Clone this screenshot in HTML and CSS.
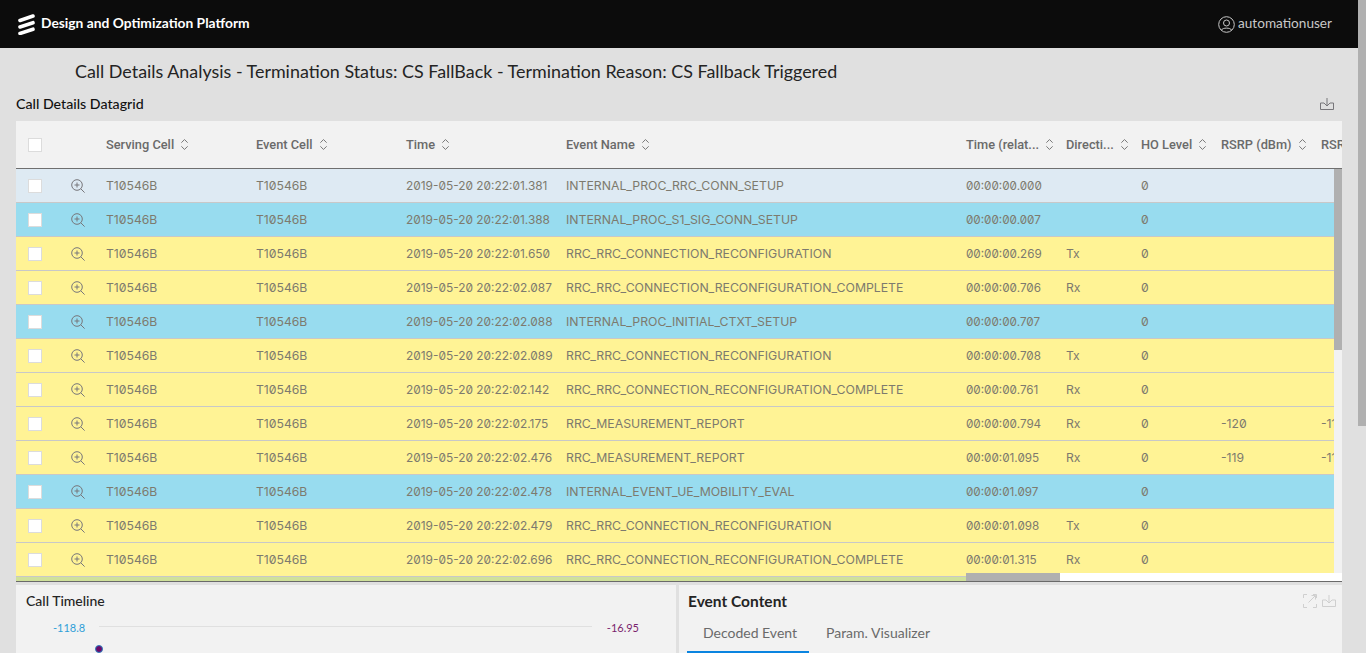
FILE: index.html
```html
<!DOCTYPE html>
<html lang="en">
  <head>
    <meta charset="UTF-8" />
    <title>Design and Optimization Platform</title>
    <link rel="stylesheet" href="styles.css">
  </head>

  <body>
    <svg class="defs" width="0" height="0">
      <symbol id="sort" viewBox="0 0 10 14">
        <path d="M1.5 5 L5 1.5 L8.5 5 M1.5 9 L5 12.5 L8.5 9" fill="none" stroke="currentColor" stroke-width="1" />
      </symbol>
      <symbol id="zoom" viewBox="0 0 14 14">
        <circle cx="6" cy="6" r="5.3" fill="none" stroke="currentColor" />
        <path d="M3.5 6 H8.5 M6 3.5 V8.5 M9.8 9.8 L13.6 13.6" fill="none" stroke="currentColor" />
      </symbol>
      <symbol id="download" viewBox="0 0 14 12">
        <path d="M4 5 H0.5 V11.5 H13.5 V5 H10 M7 0 V8 M4 5 L7 8 L10 5" fill="none" stroke="currentColor" />
      </symbol>
    </svg>

    <div class="page">
      <header class="topbar">
        <div class="brand">
          <svg class="logo" width="17" height="22" viewBox="0 0 17 22">
            <path d="M2 7.5 L15 3 M2 14 L15 9.7 M2 20.5 L15 16.2" fill="none" stroke="#fff" stroke-width="3.6" stroke-linecap="round" />
          </svg>
          <span>Design and Optimization Platform</span>
        </div>
        <div class="user">
          <svg width="17" height="17" viewBox="0 0 17 17">
            <circle cx="8.5" cy="8.5" r="7.8" fill="none" stroke="currentColor" />
            <circle cx="8.5" cy="7" r="3" fill="none" stroke="currentColor" />
            <path d="M3.5 14 C4.5 11.5 12.5 11.5 13.5 14" fill="none" stroke="currentColor" />
          </svg>
          <span>automationuser</span>
        </div>
      </header>

      <main class="content">
        <h1 class="pageTitle">Call Details Analysis - Termination Status: CS FallBack - Termination Reason: CS Fallback Triggered</h1>

        <div class="gridTitle">
          <h2>Call Details Datagrid</h2>
          <svg class="dlIcon" width="14" height="12"><use href="#download" /></svg>
        </div>

        <section class="grid">
          <div class="row head">
            <div><span class="check"></span></div>
            <div></div>
            <div>Serving Cell <svg class="sortIcon"><use href="#sort" /></svg></div>
            <div>Event Cell <svg class="sortIcon"><use href="#sort" /></svg></div>
            <div>Time <svg class="sortIcon"><use href="#sort" /></svg></div>
            <div>Event Name <svg class="sortIcon"><use href="#sort" /></svg></div>
            <div>Time (relat... <svg class="sortIcon"><use href="#sort" /></svg></div>
            <div>Directi... <svg class="sortIcon"><use href="#sort" /></svg></div>
            <div>HO Level <svg class="sortIcon"><use href="#sort" /></svg></div>
            <div>RSRP (dBm) <svg class="sortIcon"><use href="#sort" /></svg></div>
            <div>RSRQ (dB)</div>
          </div>

          <div class="bodyWrap">
            <div class="rows">
              <div class="row light"><div><span class="check"></span></div><div><svg class="zoomIcon"><use href="#zoom" /></svg></div><div>T10546B</div><div>T10546B</div><div class="date">2019-05-20 20:22:01.381</div><div class="name">INTERNAL_PROC_RRC_CONN_SETUP</div><div class="rel">00:00:00.000</div><div></div><div>0</div><div></div><div></div></div>
              <div class="row blue"><div><span class="check"></span></div><div><svg class="zoomIcon"><use href="#zoom" /></svg></div><div>T10546B</div><div>T10546B</div><div class="date">2019-05-20 20:22:01.388</div><div class="name">INTERNAL_PROC_S1_SIG_CONN_SETUP</div><div class="rel">00:00:00.007</div><div></div><div>0</div><div></div><div></div></div>
              <div class="row yellow"><div><span class="check"></span></div><div><svg class="zoomIcon"><use href="#zoom" /></svg></div><div>T10546B</div><div>T10546B</div><div class="date">2019-05-20 20:22:01.650</div><div class="name">RRC_RRC_CONNECTION_RECONFIGURATION</div><div class="rel">00:00:00.269</div><div>Tx</div><div>0</div><div></div><div></div></div>
              <div class="row yellow"><div><span class="check"></span></div><div><svg class="zoomIcon"><use href="#zoom" /></svg></div><div>T10546B</div><div>T10546B</div><div class="date">2019-05-20 20:22:02.087</div><div class="name">RRC_RRC_CONNECTION_RECONFIGURATION_COMPLETE</div><div class="rel">00:00:00.706</div><div>Rx</div><div>0</div><div></div><div></div></div>
              <div class="row blue"><div><span class="check"></span></div><div><svg class="zoomIcon"><use href="#zoom" /></svg></div><div>T10546B</div><div>T10546B</div><div class="date">2019-05-20 20:22:02.088</div><div class="name">INTERNAL_PROC_INITIAL_CTXT_SETUP</div><div class="rel">00:00:00.707</div><div></div><div>0</div><div></div><div></div></div>
              <div class="row yellow"><div><span class="check"></span></div><div><svg class="zoomIcon"><use href="#zoom" /></svg></div><div>T10546B</div><div>T10546B</div><div class="date">2019-05-20 20:22:02.089</div><div class="name">RRC_RRC_CONNECTION_RECONFIGURATION</div><div class="rel">00:00:00.708</div><div>Tx</div><div>0</div><div></div><div></div></div>
              <div class="row yellow"><div><span class="check"></span></div><div><svg class="zoomIcon"><use href="#zoom" /></svg></div><div>T10546B</div><div>T10546B</div><div class="date">2019-05-20 20:22:02.142</div><div class="name">RRC_RRC_CONNECTION_RECONFIGURATION_COMPLETE</div><div class="rel">00:00:00.761</div><div>Rx</div><div>0</div><div></div><div></div></div>
              <div class="row yellow"><div><span class="check"></span></div><div><svg class="zoomIcon"><use href="#zoom" /></svg></div><div>T10546B</div><div>T10546B</div><div class="date">2019-05-20 20:22:02.175</div><div class="name">RRC_MEASUREMENT_REPORT</div><div class="rel">00:00:00.794</div><div>Rx</div><div>0</div><div>-120</div><div>-11</div></div>
              <div class="row yellow"><div><span class="check"></span></div><div><svg class="zoomIcon"><use href="#zoom" /></svg></div><div>T10546B</div><div>T10546B</div><div class="date">2019-05-20 20:22:02.476</div><div class="name">RRC_MEASUREMENT_REPORT</div><div class="rel">00:00:01.095</div><div>Rx</div><div>0</div><div>-119</div><div>-11</div></div>
              <div class="row blue"><div><span class="check"></span></div><div><svg class="zoomIcon"><use href="#zoom" /></svg></div><div>T10546B</div><div>T10546B</div><div class="date">2019-05-20 20:22:02.478</div><div class="name">INTERNAL_EVENT_UE_MOBILITY_EVAL</div><div class="rel">00:00:01.097</div><div></div><div>0</div><div></div><div></div></div>
              <div class="row yellow"><div><span class="check"></span></div><div><svg class="zoomIcon"><use href="#zoom" /></svg></div><div>T10546B</div><div>T10546B</div><div class="date">2019-05-20 20:22:02.479</div><div class="name">RRC_RRC_CONNECTION_RECONFIGURATION</div><div class="rel">00:00:01.098</div><div>Tx</div><div>0</div><div></div><div></div></div>
              <div class="row yellow"><div><span class="check"></span></div><div><svg class="zoomIcon"><use href="#zoom" /></svg></div><div>T10546B</div><div>T10546B</div><div class="date">2019-05-20 20:22:02.696</div><div class="name">RRC_RRC_CONNECTION_RECONFIGURATION_COMPLETE</div><div class="rel">00:00:01.315</div><div>Rx</div><div>0</div><div></div><div></div></div>
              <div class="row green"></div>
            </div>
            <div class="vbar"><div class="vthumb"></div></div>
            <div class="hbar"><div class="hthumb"></div></div>
          </div>
        </section>

        <div class="panels">
          <section class="panel timeline">
            <h3>Call Timeline</h3>
            <div class="chart">
              <span class="axisLeft">-118.8</span>
              <span class="axisLine"></span>
              <span class="axisRight">-16.95</span>
              <span class="dot"></span>
            </div>
          </section>
          <section class="panel eventContent">
            <div class="panelHead">
              <h3>Event Content</h3>
              <div class="panelIcons">
                <svg width="14" height="14" viewBox="0 0 14 14">
                  <path d="M0.5 4 V0.5 H4 M10 0.5 H13.5 V4 M13.5 10 V13.5 H10 M4 13.5 H0.5 V10 M5.5 8.5 L12 2 M8.5 1.5 H12.5 V5.5" fill="none" stroke="currentColor" />
                </svg>
                <svg width="14" height="12"><use href="#download" /></svg>
              </div>
            </div>
            <div class="tabs">
              <div class="tab active">Decoded Event</div>
              <div class="tab">Param. Visualizer</div>
            </div>
          </section>
        </div>
      </main>
    </div>

    <div class="pageBar"><div class="pageThumb"></div></div>
  </body>
</html>
```

FILE: styles.css
```css
* {
  box-sizing: border-box;
}

html, body {
  height: 100%;
}

body {
  margin: 0;
  display: flex;
  height: 653px;
  overflow: hidden;
  background-color: #e0e0e0;
  font-family: "Lato", "Liberation Sans", sans-serif;
  color: #242424;
}

.defs {
  position: absolute;
}

.page {
  flex: 1;
  min-width: 0;
}

.topbar {
  height: 48px;
  display: flex;
  align-items: center;
  justify-content: space-between;
  padding: 0 26px 0 18px;
  background-color: #0c0c0c;
  color: #fff;
}

.brand {
  display: flex;
  align-items: center;
  gap: 6px;
  font-size: 13.8px;
  font-weight: 700;
}

.brand span {
  padding-bottom: 3px;
}

.user {
  display: flex;
  align-items: center;
  gap: 3px;
  font-size: 13.6px;
  color: #c8c8c8;
}

.user span {
  padding-bottom: 2px;
}

.content {
  padding: 0 16px;
}

.pageTitle {
  margin: 0;
  padding: 13px 0 0 59px;
  height: 40px;
  font-size: 17.9px;
  font-weight: 400;
  line-height: 20px;
  color: #242424;
}

.gridTitle {
  display: flex;
  align-items: center;
  justify-content: space-between;
  height: 33px;
  padding: 0 8px 2px 0;
}

.gridTitle h2 {
  margin: 0;
  font-size: 14.2px;
  font-weight: 500;
  color: #111;
}

.dlIcon {
  color: #77767a;
}

.grid {
  background-color: #f2f2f2;
  border-bottom: 1px solid #6a6a6a;
}

.row {
  display: grid;
  grid-template-columns: 55px 35px 150px 150px 160px 400px 100px 75px 80px 100px 100px;
  align-items: center;
  height: 34px;
  border-bottom: 1px solid #c8c8c8;
  font-family: "Inter", "Liberation Sans", sans-serif;
  font-feature-settings: "zero";
  font-size: 12.2px;
  color: #7d7a6e;
  white-space: nowrap;
}

.row > div:first-child {
  padding-left: 12px;
}

.row > div:nth-child(2) {
  display: flex;
}

.row .date {
  font-size: 11.9px;
}

.row .name {
  font-size: 12.27px;
}

.row .rel {
  font-size: 11.7px;
}

.head {
  height: 48px;
  border-bottom: 1px solid #6f6f6f;
  overflow: hidden;
  font-family: "Roboto", "Liberation Sans", sans-serif;
  font-size: 12.8px;
  font-weight: 500;
  color: #6a6a6a;
}

.head > div {
  display: flex;
  align-items: center;
  gap: 6px;
}

.check {
  display: block;
  width: 14px;
  height: 14px;
  background-color: #fff;
  border: 1px solid #dcdcdc;
}

.zoomIcon {
  width: 14px;
  height: 14px;
  color: #77767a;
}

.sortIcon {
  width: 9px;
  height: 13px;
  color: #6a6a6a;
}

.bodyWrap {
  position: relative;
  height: 412px;
  overflow: hidden;
}

.rows {
  margin-right: 8px;
}

.light {
  background-color: #deeaf3;
}

.blue {
  background-color: #98dcef;
}

.yellow {
  background-color: #fff395;
}

.green {
  background-color: #cfe19b;
}

.vbar {
  position: absolute;
  top: 0;
  right: 0;
  width: 8px;
  height: 100%;
  background-color: #f2f2f2;
}

.vthumb {
  height: 181px;
  background-color: #b0b0b0;
}

.hbar {
  position: absolute;
  left: 950px;
  right: 0;
  bottom: 0;
  height: 8px;
  background-color: #fff;
}

.hthumb {
  width: 94px;
  height: 8px;
  background-color: #b0b0b0;
}

.panels {
  display: flex;
  gap: 3px;
  margin-top: 3px;
  height: 68px;
}

.panel {
  background-color: #f2f2f2;
  overflow: hidden;
}

.panel h3 {
  margin: 0;
  font-size: 14px;
}

.timeline {
  width: 660px;
  padding: 7px 10px;
}

.timeline h3 {
  font-weight: 500;
}

.chart {
  position: relative;
  height: 60px;
  font-size: 11px;
}

.axisLeft {
  position: absolute;
  left: 27px;
  top: 12px;
  color: #2f9fd8;
}

.axisLine {
  position: absolute;
  left: 73px;
  right: 74px;
  top: 17px;
  height: 1px;
  background-color: #e0e0e0;
}

.axisRight {
  position: absolute;
  right: 27px;
  top: 12px;
  color: #7a1f6e;
}

.dot {
  position: absolute;
  left: 69px;
  top: 36px;
  width: 8px;
  height: 8px;
  border-radius: 50%;
  background-color: #6a0a6a;
  border: 1px solid #2a7fc0;
}

.eventContent {
  flex: 1;
  padding: 6px 0 0 8px;
}

.panelHead {
  display: flex;
  justify-content: space-between;
  align-items: center;
  height: 19px;
  padding: 0 6px 0 1px;
}

.panel .panelHead h3 {
  font-size: 15.5px;
  font-weight: 700;
}

.panelIcons {
  display: flex;
  align-items: center;
  gap: 5px;
  color: #cfcfcf;
}

.tabs {
  display: flex;
  margin-top: 10px;
}

.tab {
  padding: 0 0 0 16px;
  height: 33px;
  line-height: 26px;
  font-size: 14px;
  color: #6a6a6a;
}

.tab + .tab {
  margin-left: 1px;
}

.tab.active {
  width: 122px;
  border-bottom: 2px solid #0a84e0;
}

.pageBar {
  width: 8px;
  background-color: #e0e0e0;
}

.pageThumb {
  height: 426px;
  background-color: #b0b0b0;
}
```
